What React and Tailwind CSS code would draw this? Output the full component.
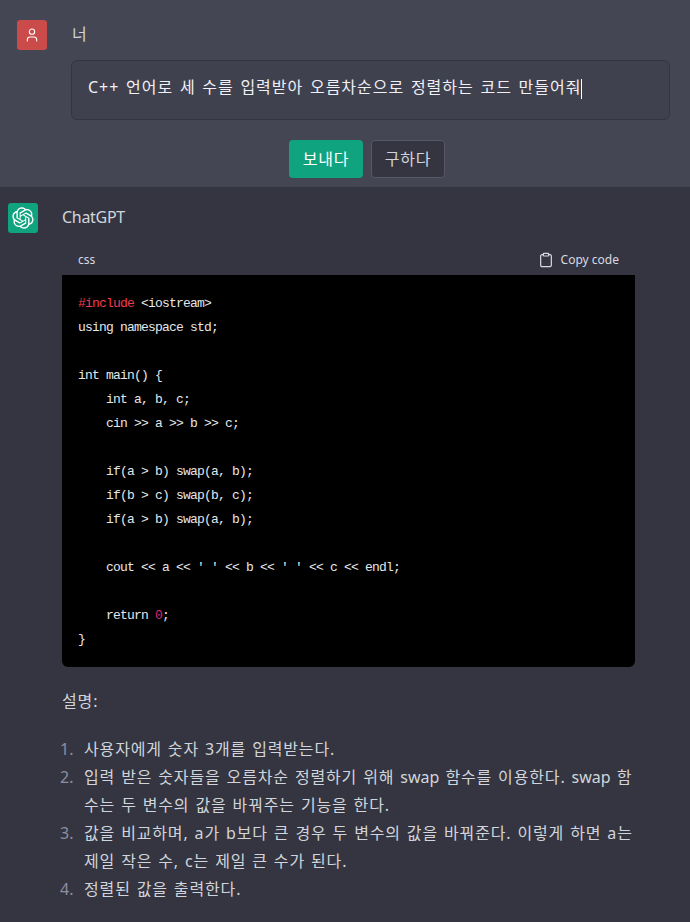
import React from "react";
import { Clipboard, User } from "lucide-react";

const sans = "font-['Noto_Sans','Noto_Sans_CJK_KR',sans-serif]";
const ko = "tracking-[0.85px] [word-spacing:1px]";
const koInput = "tracking-[1px] [word-spacing:1.5px]";

function Latin({ children }) {
  return <span className="tracking-normal">{children}</span>;
}

function Logo() {
  return (
    <svg viewBox="0 0 41 41" className="w-[22px] h-[22px]" fill="currentColor">
      <path d="M37.5324 16.8707C37.9808 15.5241 38.1363 14.0974 37.9886 12.6859C37.8409 11.2744 37.3934 9.91076 36.676 8.68622C35.6126 6.83404 33.9882 5.3676 32.0373 4.4985C30.0864 3.62941 27.9098 3.40259 25.8215 3.85078C24.8796 2.7893 23.7219 1.94125 22.4257 1.36341C21.1295 0.785575 19.7249 0.491269 18.3058 0.500197C16.1708 0.495044 14.0893 1.16803 12.3614 2.42214C10.6335 3.67624 9.34853 5.44666 8.6917 7.47815C7.30085 7.76286 5.98686 8.3414 4.8377 9.17505C3.68854 10.0087 2.73073 11.0782 2.02839 12.312C0.956464 14.1591 0.498905 16.2988 0.721698 18.4228C0.944492 20.5467 1.83612 22.5449 3.268 24.1293C2.81966 25.4759 2.66413 26.9026 2.81182 28.3141C2.95951 29.7256 3.40701 31.0892 4.12437 32.3138C5.18791 34.1659 6.8123 35.6322 8.76321 36.5013C10.7141 37.3704 12.8907 37.5973 14.9789 37.1492C15.9208 38.2107 17.0786 39.0587 18.3747 39.6366C19.6709 40.2144 21.0755 40.5087 22.4946 40.4998C24.6307 40.5054 26.7133 39.8321 28.4418 38.5772C30.1704 37.3223 31.4556 35.5506 32.1119 33.5179C33.5027 33.2332 34.8167 32.6547 35.9659 31.821C37.115 30.9874 38.0728 29.9178 38.7752 28.684C39.8458 26.8371 40.3023 24.6979 40.0789 22.5748C39.8556 20.4517 38.9639 18.4544 37.5324 16.8707ZM22.4978 37.8849C20.7443 37.8874 19.0459 37.2733 17.6994 36.1501C17.7601 36.117 17.8666 36.0586 17.936 36.0161L25.9004 31.4156C26.1003 31.3019 26.2663 31.137 26.3813 30.9378C26.4964 30.7386 26.5563 30.5124 26.5549 30.2825V19.0542L29.9213 20.998C29.9389 21.0068 29.9541 21.0198 29.9656 21.0359C29.977 21.052 29.9842 21.0707 29.9867 21.0902V30.3889C29.9842 32.375 29.1946 34.2791 27.7909 35.6841C26.3872 37.0892 24.4838 37.8806 22.4978 37.8849ZM6.39227 31.0064C5.51397 29.4888 5.19742 27.7107 5.49804 25.9832C5.55718 26.0187 5.66048 26.0818 5.73461 26.1244L13.699 30.7248C13.8975 30.8408 14.1233 30.902 14.3532 30.902C14.583 30.902 14.8088 30.8408 15.0073 30.7248L24.731 25.1103V28.9979C24.7321 29.0177 24.7283 29.0376 24.7199 29.0556C24.7115 29.0736 24.6988 29.0893 24.6829 29.1012L16.6317 33.7497C14.9096 34.7416 12.8643 35.0097 10.9447 34.4954C9.02506 33.9811 7.38785 32.7263 6.39227 31.0064ZM4.29707 13.6194C5.17156 12.0998 6.55279 10.9364 8.19885 10.3327C8.19885 10.4013 8.19491 10.5228 8.19491 10.6071V19.808C8.19351 20.0378 8.25334 20.2638 8.36823 20.4629C8.48312 20.6619 8.64893 20.8267 8.84863 20.9404L18.5723 26.5542L15.206 28.4979C15.1894 28.5089 15.1703 28.5155 15.1505 28.5173C15.1307 28.5191 15.1107 28.516 15.0924 28.5082L7.04046 23.8557C5.32135 22.8601 4.06716 21.2235 3.55289 19.3046C3.03862 17.3858 3.30624 15.3413 4.29707 13.6194ZM31.955 20.0556L22.2312 14.4411L25.5976 12.4981C25.6142 12.4872 25.6333 12.4805 25.6531 12.4787C25.6729 12.4769 25.6928 12.4801 25.7111 12.4879L33.7631 17.1364C34.9967 17.849 36.0017 18.8982 36.6606 20.1613C37.3194 21.4244 37.6047 22.849 37.4832 24.2684C37.3617 25.6878 36.8382 27.0432 35.9743 28.1759C35.1103 29.3086 33.9415 30.1717 32.6047 30.6641C32.6047 30.5947 32.6047 30.4733 32.6047 30.3889V21.188C32.6066 20.9586 32.5474 20.7328 32.4332 20.5338C32.319 20.3348 32.154 20.1698 31.955 20.0556ZM35.3055 15.0128C35.2464 14.9765 35.1431 14.9142 35.069 14.8717L27.1045 10.2712C26.906 10.1554 26.6803 10.0943 26.4504 10.0943C26.2206 10.0943 25.9948 10.1554 25.7963 10.2712L16.0726 15.8858V11.9982C16.0715 11.9783 16.0753 11.9585 16.0837 11.9405C16.0921 11.9225 16.1048 11.9068 16.1207 11.8949L24.1719 7.25025C25.4053 6.53903 26.8158 6.19376 28.2383 6.25482C29.6608 6.31589 31.0364 6.78077 32.2044 7.59508C33.3723 8.40939 34.2842 9.53945 34.8334 10.8531C35.3826 12.1667 35.5464 13.6095 35.3055 15.0128ZM14.2424 21.9419L10.8752 19.9981C10.8576 19.9893 10.8423 19.9763 10.8309 19.9602C10.8195 19.9441 10.8122 19.9254 10.8098 19.9058V10.6071C10.8107 9.18295 11.2173 7.78848 11.9819 6.58696C12.7466 5.38544 13.8377 4.42659 15.1275 3.82264C16.4173 3.21869 17.8524 2.99464 19.2649 3.1767C20.6775 3.35876 22.0089 3.93941 23.1034 4.85067C23.0427 4.88379 22.937 4.94215 22.8668 4.98473L14.9024 9.58517C14.7025 9.69878 14.5366 9.86356 14.4215 10.0626C14.3065 10.2616 14.2466 10.4877 14.2479 10.7175L14.2424 21.9419ZM16.071 17.9991L20.4018 15.4978L24.7325 17.9975V22.9985L20.4018 25.4983L16.071 22.9985V17.9991Z" />
    </svg>
  );
}

const items = [
  <>사용자에게 숫자 3개를 입력받는다.</>,
  <>입력 받은 숫자들을 오름차순 정렬하기 위해 <Latin>swap</Latin> 함수를 이용한다. <Latin>swap</Latin> 함수는 두 변수의 값을 바꿔주는 기능을 한다.</>,
  <>값을 비교하며, a가 b보다 큰 경우 두 변수의 값을 바꿔준다. 이렇게 하면 a는 제일 작은 수, c는 제일 큰 수가 된다.</>,
  <>정렬된 값을 출력한다.</>,
];

const codeLines = [
  <><span className="text-[#ef3b4e]">#include</span> {"<iostream>"}</>,
  "using namespace std;",
  "",
  "int main() {",
  "    int a, b, c;",
  "    cin >> a >> b >> c;",
  "",
  "    if(a > b) swap(a, b);",
  "    if(b > c) swap(b, c);",
  "    if(a > b) swap(a, b);",
  "",
  "    cout << a << ' ' << b << ' ' << c << endl;",
  "",
  <>{"    return "}<span className="text-[#e0266f]">0</span>;</>,
  "}",
];

export default function App() {
  return (
    <div className={`w-[690px] h-[922px] overflow-hidden bg-[#343541] text-[#d1d5db] ${sans}`}>
      <section className="h-[187px] bg-[#444654] flex gap-6 pl-[17px] pr-5 pt-5">
        <div className="w-[30px] h-[30px] rounded-[3px] bg-[#cb4a4a] flex items-center justify-center text-white shrink-0">
          <User size={16} strokeWidth={1.6} />
        </div>
        <div className="flex-1 min-w-0">
          <div className="h-7 leading-7 text-base pl-px">너</div>
          <div className={`mt-[12px] h-[60px] rounded-md border border-[#343541] bg-[#40414f] px-4 py-[14px] text-base leading-[24px] text-[#f0f0f5] whitespace-nowrap ${koInput}`}>
            C++ 언어로 세 수를 입력받아 오름차순으로 정렬하는 코드 만들어줘
            <span className="inline-block w-px h-5 bg-white align-middle" />
          </div>
          <div className="mt-5 flex justify-center gap-2 pr-[7px]">
            <button className={`h-[38px] w-[74px] rounded-[4px] bg-[#10a37f] text-white text-base ${ko}`}>보내다</button>
            <button className={`h-[38px] w-[74px] rounded-[4px] bg-[#343541] border border-[#565869] text-[#d1d5db] text-base ${ko}`}>구하다</button>
          </div>
        </div>
      </section>

      <section className="flex gap-6 pl-2 pr-[55px] pt-4">
        <div className="w-[30px] h-[30px] rounded-[3px] bg-[#10a37f] flex items-center justify-center text-white shrink-0">
          <Logo />
        </div>
        <div className="flex-1 min-w-0">
          <div className="h-7 leading-7 text-base tracking-[-0.3px]">ChatGPT</div>
          <div className="mt-3 rounded-md overflow-hidden">
            <div className="h-8 pt-px flex items-center justify-between pl-4 pr-4 text-xs text-[#d9d9e3]">
              <span>css</span>
              <span className="flex items-center gap-[7px]">
                <Clipboard size={16} strokeWidth={1.8} />
                Copy code
              </span>
            </div>
            <div className="bg-black px-4 pt-[17px] pb-[15px] font-['Liberation_Mono',monospace] text-[13px] leading-6 tracking-[-0.8px] text-[#e5e7eb] h-[392px]">
              {codeLines.map((line, i) => (
                <div key={i} className="h-6 whitespace-pre">{line}</div>
              ))}
            </div>
          </div>
          <p className={`mt-5 text-base leading-7 ${ko}`}>설명:</p>
          <ol className="mt-5 -ml-[2px] text-base leading-7">
            {items.map((item, i) => (
              <li key={i} className="flex">
                <span className="w-6 shrink-0 text-[#8e8ea0]">{i + 1}.</span>
                <span className={`min-w-0 ${ko}`}>{item}</span>
              </li>
            ))}
          </ol>
        </div>
      </section>
    </div>
  );
}
